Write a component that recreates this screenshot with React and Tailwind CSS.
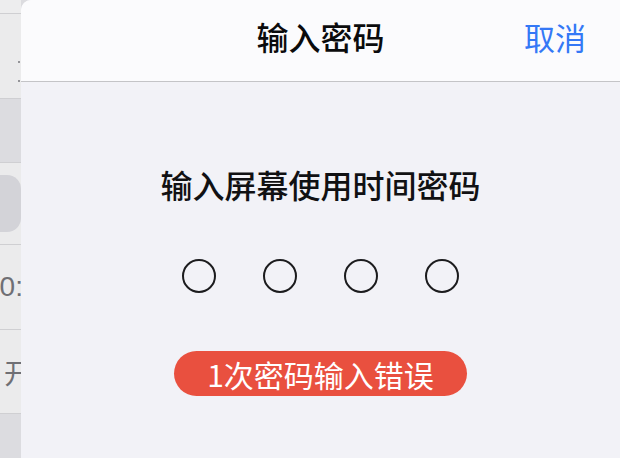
// Screen Time passcode sheet over a settings list
const cjk = "font-['Noto_Sans_CJK_SC','Noto_Sans',sans-serif]";

function Dot() {
  return (
    <div className="w-[34px] h-[34px] rounded-full border-2 border-[#1c1c1e]" />
  );
}

export default function App() {
  return (
    <div className={`w-[620px] h-[458px] flex bg-[#dcdce0] overflow-hidden ${cjk}`}>

      {/* settings list peeking out behind the sheet */}
      <div className="w-[21px] shrink-0 flex flex-col overflow-hidden">
        <div className="h-[14px] bg-[#ededee] border-b border-[#cfcfd2]" />
        <div className="h-[85px] bg-[#ebebec] border-b border-[#cfcfd2] flex flex-col items-end pt-[47px] gap-[17px] pr-[1px]">
          <span className="w-[2px] h-[2px] rounded-full bg-[#77777c]" />
          <span className="w-[2px] h-[2px] rounded-full bg-[#77777c]" />
        </div>
        <div className="h-[64px] bg-[#dcdce0] border-b border-[#cfcfd2]" />
        <div className="h-[82px] bg-[#ebebec] border-b border-[#cfcfd2] pt-[12px]">
          <div className="h-[57px] rounded-r-[14px] bg-[#d3d3d8]" />
        </div>
        <div className="h-[85px] bg-[#ebebec] border-b border-[#cfcfd2] flex items-center">
          <span className="ml-[-16px] whitespace-nowrap text-[28px] leading-none text-[#6f6f74] font-['Liberation_Sans',sans-serif]">
            10:00
          </span>
        </div>
        <div className="h-[84px] bg-[#ebebec] border-b border-[#cfcfd2] flex items-center">
          <span className="ml-[4px] whitespace-nowrap text-[28px] leading-none text-[#6f6f74]">
            开启
          </span>
        </div>
        <div className="flex-1 bg-[#dcdce0]" />
      </div>

      {/* sheet */}
      <div className="flex-1 flex flex-col rounded-tl-[10px] overflow-hidden bg-[#f2f2f7]">

        {/* header */}
        <div className="h-[82px] shrink-0 bg-[#fbfbfd] border-b border-[#c4c4c7] grid grid-cols-[1fr_auto_1fr] items-center pb-[9px]">
          <div />
          <h1 className="text-[32px] font-medium text-[#0b0b0c] leading-none">
            输入密码
          </h1>
          <div className="flex justify-end pr-[34px]">
            <button className="text-[31px] text-[#3478f6] leading-none">
              取消
            </button>
          </div>
        </div>

        {/* body */}
        <div className="flex-1 flex flex-col items-center pt-[82px]">
          <h2 className="text-[32px] font-medium text-[#111113] leading-[40px]">
            输入屏幕使用时间密码
          </h2>

          <div className="mt-[55px] flex gap-[47px]">
            <Dot />
            <Dot />
            <Dot />
            <Dot />
          </div>

          <div className="mt-[58px] h-[45px] w-[293px] rounded-full bg-[#e9503f] flex items-center justify-center">
            <span className="text-[30px] text-white leading-none">
              1次密码输入错误
            </span>
          </div>
        </div>
      </div>
    </div>
  );
}
